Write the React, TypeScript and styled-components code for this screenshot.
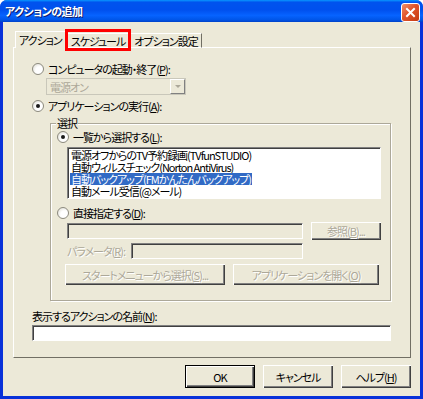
import React from "react";
import styled, { createGlobalStyle } from "styled-components";

const GlobalStyle = createGlobalStyle`
  html, body {
    margin: 0;
    padding: 0;
    background: #ffffff;
  }
  body {
    font-family: "Noto Sans CJK JP", "Liberation Sans", sans-serif;
    font-size: 11px;
    letter-spacing: -1px;
    font-feature-settings: "palt" 1;
    color: #000;
  }
`;

const Window = styled.div`
  width: 423px;
  height: 399px;
  box-sizing: border-box;
  display: flex;
  flex-direction: column;
  background: #0831d9;
  border-radius: 7px 7px 0 0;
  overflow: hidden;
`;

const TitleBar = styled.div`
  height: 22px;
  flex-shrink: 0;
  display: flex;
  align-items: center;
  justify-content: space-between;
  padding: 0 3px 0 5px;
  background: linear-gradient(
    to bottom,
    #0997ff 0%,
    #0053ee 10%,
    #0050ee 45%,
    #0663ff 70%,
    #0055e8 90%,
    #0041c8 100%
  );
`;

const Title = styled.span`
  color: #fff;
  font-weight: bold;
  font-size: 11px;
  letter-spacing: -0.5px;
  text-shadow: 1px 1px 0 #0a1b6e;
`;

const CloseButton = styled.div`
  width: 17px;
  height: 17px;
  border: 1px solid #fff;
  border-radius: 3px;
  background: linear-gradient(135deg, #f0906a 0%, #e0542a 45%, #c53a12 100%);
  display: flex;
  align-items: center;
  justify-content: center;
  margin-top: 2px;
`;

const Body = styled.div`
  flex: 1;
  margin: 0 3px 3px 3px;
  background: #ece9d8;
  padding: 9px 9px 0 10px;
  display: flex;
  flex-direction: column;
`;

const TabRow = styled.div`
  position: relative;
  display: flex;
  align-items: flex-end;
  height: 17px;
  padding-left: 2px;
  margin-bottom: -1px;
  z-index: 1;
`;

const Tab = styled.div<{ active?: boolean }>`
  position: relative;
  height: ${(p) => (p.active ? "17px" : "15px")};
  box-sizing: border-box;
  padding: 0 3px;
  display: flex;
  align-items: center;
  background: #ece9d8;
  border-top: 1px solid #fff;
  border-left: 1px solid #fff;
  border-right: 1px solid #716f64;
  border-bottom: ${(p) => (p.active ? "none" : "1px solid #fff")};
  margin-left: ${(p) => (p.active ? "0" : "1px")};
  white-space: nowrap;
`;

const Highlight = styled.div`
  position: absolute;
  z-index: 2;
  left: -3px;
  right: -3px;
  top: -5px;
  bottom: -4px;
  border: 3px solid #ff0000;
`;

const Panel = styled.div`
  height: 311px;
  box-sizing: border-box;
  border-top: 1px solid #fff;
  border-left: 1px solid #fff;
  border-right: 1px solid #716f64;
  border-bottom: 1px solid #716f64;
  padding-left: 18px;
  display: flex;
  flex-direction: column;
  align-items: flex-start;
`;

const RadioRow = styled.label<{ top: number }>`
  display: flex;
  align-items: center;
  height: 13px;
  margin-top: ${(p) => p.top}px;
  white-space: nowrap;
`;

const RadioDot = styled.span<{ checked?: boolean }>`
  width: 12px;
  height: 12px;
  box-sizing: border-box;
  border-radius: 50%;
  border: 1px solid #8c8a7e;
  background: radial-gradient(circle at 65% 65%, #ffffff 40%, #d8d6cc 100%);
  margin-right: 4px;
  display: flex;
  align-items: center;
  justify-content: center;
  flex-shrink: 0;
  &::after {
    content: "";
    display: ${(p) => (p.checked ? "block" : "none")};
    width: 4px;
    height: 4px;
    border-radius: 50%;
    background: #1a1a1a;
  }
`;

const Select = styled.div`
  margin: 3px 0 0 14px;
  width: 140px;
  height: 17px;
  box-sizing: border-box;
  border: 1px solid #c9c7ba;
  background: #ece9d8;
  display: flex;
  align-items: center;
  justify-content: space-between;
  padding-left: 3px;
  color: #aca899;
`;

const SelectArrow = styled.div`
  width: 15px;
  height: 15px;
  box-sizing: border-box;
  border-left: 1px solid #fff;
  border-top: 1px solid #fff;
  border-right: 1px solid #808080;
  border-bottom: 1px solid #808080;
  display: flex;
  align-items: center;
  justify-content: center;
  &::after {
    content: "";
    border-left: 3px solid transparent;
    border-right: 3px solid transparent;
    border-top: 3px solid #aca899;
  }
`;

const Group = styled.div`
  position: relative;
  margin: 11px 0 0 18px;
  width: 341px;
  height: 178px;
  box-sizing: border-box;
  border: 1px solid #aca899;
  box-shadow: inset 1px 1px 0 #fff, 1px 1px 0 #fff;
  padding-left: 6px;
  display: flex;
  flex-direction: column;
  align-items: flex-start;
`;

const Legend = styled.span`
  position: absolute;
  top: -8px;
  left: 5px;
  padding: 0 1px;
  background: #ece9d8;
  line-height: 14px;
`;

const Indented = styled.div<{ top: number }>`
  margin: ${(p) => p.top}px 0 0 10px;
  display: flex;
  align-items: center;
  gap: 8px;
`;

const ListBox = styled.div`
  margin: 4px 0 0 10px;
  width: 314px;
  height: 52px;
  box-sizing: border-box;
  background: #fff;
  border-top: 1px solid #808080;
  border-left: 1px solid #808080;
  border-right: 1px solid #fff;
  border-bottom: 1px solid #fff;
  box-shadow: inset 1px 1px 0 #404040;
  padding: 1px 0 0 2px;
  display: flex;
  flex-direction: column;
  align-items: flex-start;
`;

const ListItem = styled.div<{ selected?: boolean }>`
  height: 12px;
  line-height: 12px;
  padding: 0 1px;
  white-space: nowrap;
  background: ${(p) => (p.selected ? "#316ac5" : "transparent")};
  color: ${(p) => (p.selected ? "#fff" : "#000")};
`;

const TextBox = styled.div<{ width: number; disabled?: boolean }>`
  width: ${(p) => p.width}px;
  height: 16px;
  box-sizing: border-box;
  background: ${(p) => (p.disabled ? "#ece9d8" : "#fff")};
  border-top: 1px solid #808080;
  border-left: 1px solid #808080;
  border-right: 1px solid #fff;
  border-bottom: 1px solid #fff;
  box-shadow: inset 1px 1px 0 #404040;
`;

const Button = styled.div<{ width: number; height?: number; disabled?: boolean; isDefault?: boolean }>`
  width: ${(p) => p.width}px;
  height: ${(p) => p.height ?? 21}px;
  box-sizing: border-box;
  display: flex;
  align-items: center;
  justify-content: center;
  background: #ece9d8;
  white-space: nowrap;
  border: ${(p) => (p.isDefault ? "1px solid #000" : "none")};
  box-shadow: inset 1px 1px 0 #fff, inset -1px -1px 0 #404040, inset -2px -2px 0 #808080;
  color: ${(p) => (p.disabled ? "#aca899" : "#000")};
  text-shadow: ${(p) => (p.disabled ? "1px 1px 0 #fff" : "none")};
`;

const DisabledLabel = styled.span`
  color: #aca899;
  text-shadow: 1px 1px 0 #fff;
  white-space: nowrap;
  width: 56px;
`;

const ButtonRow = styled.div`
  margin: 5px 0 0 8px;
  display: flex;
  gap: 8px;
`;

const NameLabel = styled.div`
  margin-top: 9px;
  height: 13px;
  line-height: 13px;
  white-space: nowrap;
`;

const NameBox = styled(TextBox)`
  margin-top: 2px;
`;

const Footer = styled.div`
  margin-top: 7px;
  display: flex;
  justify-content: flex-end;
  gap: 8px;
`;

const U = styled.span`
  text-decoration: underline;
`;

export default function App() {
  return (
    <>
      <GlobalStyle />
      <Window>
        <TitleBar>
          <Title>アクションの追加</Title>
          <CloseButton>
            <svg width="11" height="11" viewBox="0 0 11 11">
              <path d="M2 2 L9 9 M9 2 L2 9" stroke="#fff" strokeWidth="2" strokeLinecap="square" />
            </svg>
          </CloseButton>
        </TitleBar>
        <Body>
          <TabRow>
            <Tab active>アクション</Tab>
            <Tab>
              スケジュール
              <Highlight />
            </Tab>
            <Tab>オプション設定</Tab>
          </TabRow>
          <Panel>
            <RadioRow top={14}>
              <RadioDot />
              コンピュータの起動・終了(<U>P</U>):
            </RadioRow>
            <Select>
              電源オン
              <SelectArrow />
            </Select>
            <RadioRow top={4}>
              <RadioDot checked />
              アプリケーションの実行(<U>A</U>):
            </RadioRow>
            <Group>
              <Legend>選択</Legend>
              <RadioRow top={6}>
                <RadioDot checked />
                一覧から選択する(<U>L</U>):
              </RadioRow>
              <ListBox>
                <ListItem>電源オフからのTV予約録画(TVfunSTUDIO)</ListItem>
                <ListItem>自動ウィルスチェック(Norton AntiVirus)</ListItem>
                <ListItem selected>自動バックアップ(FMかんたんバックアップ)</ListItem>
                <ListItem>自動メール受信(@メール)</ListItem>
              </ListBox>
              <RadioRow top={7}>
                <RadioDot />
                直接指定する(<U>D</U>):
              </RadioRow>
              <Indented top={3}>
                <TextBox width={236} disabled />
                <Button width={70} height={18} disabled>
                  参照(<U>B</U>)...
                </Button>
              </Indented>
              <Indented top={3}>
                <DisabledLabel>
                  パラメータ(<U>R</U>):
                </DisabledLabel>
                <TextBox width={172} disabled />
              </Indented>
              <ButtonRow>
                <Button width={160} disabled>
                  スタートメニューから選択(<U>S</U>)...
                </Button>
                <Button width={146} disabled>
                  アプリケーションを開く(<U>O</U>)
                </Button>
              </ButtonRow>
            </Group>
            <NameLabel>
              表示するアクションの名前(<U>N</U>):
            </NameLabel>
            <NameBox width={359} />
          </Panel>
          <Footer>
            <Button width={70} height={23} isDefault>
              OK
            </Button>
            <Button width={70} height={23}>
              キャンセル
            </Button>
            <Button width={70} height={23}>
              ヘルプ(<U>H</U>)
            </Button>
          </Footer>
        </Body>
      </Window>
    </>
  );
}
